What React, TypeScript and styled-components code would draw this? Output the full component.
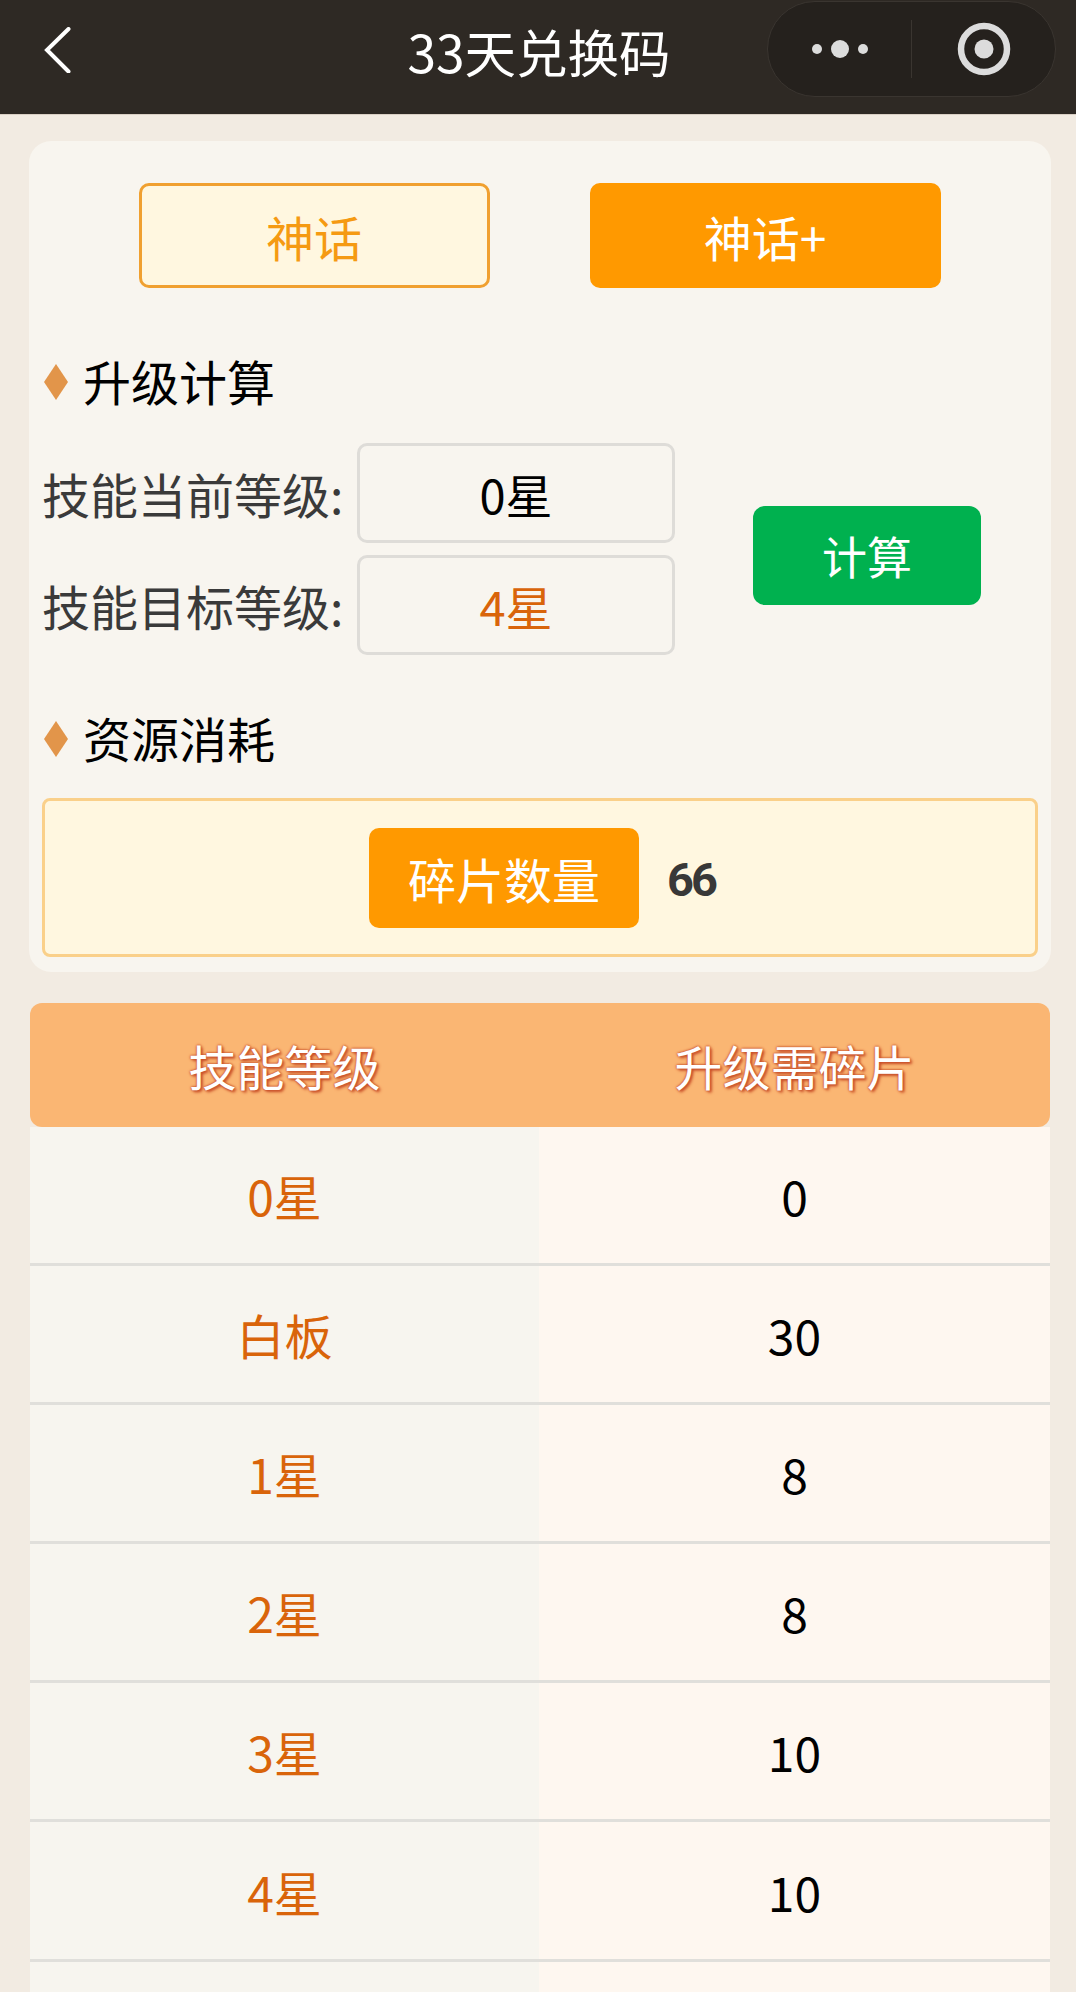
import styled, { createGlobalStyle } from "styled-components";

const levels = [
  { level: "0星", shards: "0" },
  { level: "白板", shards: "30" },
  { level: "1星", shards: "8" },
  { level: "2星", shards: "8" },
  { level: "3星", shards: "10" },
  { level: "4星", shards: "10" },
  { level: "", shards: "" },
];

export default function App() {
  return (
    <>
      <GlobalStyle />
      <Page>
        <NavBar>
          <BackButton aria-label="返回">
            <svg width="30" height="46" viewBox="0 0 30 46" fill="none">
              <path d="M26.5 2 L5 23 L26.5 44.5" stroke="#fff" strokeWidth="4" strokeLinecap="round" />
            </svg>
          </BackButton>
          <NavTitle>33天兑换码</NavTitle>
          <Capsule>
            <CapsulePart>
              <svg width="60" height="20" viewBox="0 0 60 20">
                <circle cx="7" cy="10" r="5" fill="#dcdcdc" />
                <circle cx="30" cy="10" r="9" fill="#dcdcdc" />
                <circle cx="53" cy="10" r="5" fill="#dcdcdc" />
              </svg>
            </CapsulePart>
            <CapsuleDivider />
            <CapsulePart>
              <svg width="54" height="54" viewBox="0 0 54 54">
                <circle cx="27" cy="27" r="23" fill="none" stroke="#dcdcdc" strokeWidth="6.5" />
                <circle cx="27" cy="27" r="9.5" fill="#dcdcdc" />
              </svg>
            </CapsulePart>
          </Capsule>
        </NavBar>

        <Content>
          <Card>
            <TabRow>
              <Tab>神话</Tab>
              <Tab $active>神话+</Tab>
            </TabRow>

            <SectionTitle>升级计算</SectionTitle>
            <CalcRow>
              <Fields>
                <Field>
                  <FieldLabel>技能当前等级:</FieldLabel>
                  <Picker>0星</Picker>
                </Field>
                <Field>
                  <FieldLabel>技能目标等级:</FieldLabel>
                  <Picker $accent>4星</Picker>
                </Field>
              </Fields>
              <CalcButton>计算</CalcButton>
            </CalcRow>

            <SectionTitle $second>资源消耗</SectionTitle>
            <ResultBox>
              <ResultTag>碎片数量</ResultTag>
              <ResultValue>66</ResultValue>
            </ResultBox>
          </Card>

          <Table>
            <TableHead>
              <HeadCell>技能等级</HeadCell>
              <HeadCell>升级需碎片</HeadCell>
            </TableHead>
            {levels.map((row, i) => (
              <TableRow key={i}>
                <LevelCell>{row.level}</LevelCell>
                <ValueCell>{row.shards}</ValueCell>
              </TableRow>
            ))}
          </Table>
        </Content>
      </Page>
    </>
  );
}

const GlobalStyle = createGlobalStyle`
  html, body {
    margin: 0;
    height: 1992px;
    overflow: hidden;
    background: #f2ebe2;
  }
  * {
    box-sizing: border-box;
  }
  body {
    font-family: "Noto Sans CJK SC", "Liberation Sans", sans-serif;
  }
`;

const Page = styled.div`
  width: 1076px;
  height: 1992px;
  overflow: hidden;
  background: #f2ebe2;
`;

const NavBar = styled.header`
  height: 115px;
  background: #2e2924;
  border-bottom: 1px solid #d9cfc4;
  display: flex;
  align-items: center;
  justify-content: center;
  position: relative;
`;

const BackButton = styled.div`
  position: absolute;
  left: 42px;
  top: 27px;
  display: flex;
`;

const NavTitle = styled.h1`
  margin: -13px 0 0 2px;
  font-size: 51.5px;
  font-weight: 400;
  color: #fff;
  line-height: 1;
`;

const Capsule = styled.div`
  position: absolute;
  left: 767px;
  top: 1px;
  width: 289px;
  height: 96px;
  border-radius: 48px;
  background: #25211d;
  border: 1px solid #3a3530;
  display: flex;
  align-items: center;
`;

const CapsulePart = styled.div`
  flex: 1;
  display: flex;
  justify-content: center;
`;

const CapsuleDivider = styled.div`
  width: 1px;
  height: 58px;
  background: #3a3530;
`;

const Content = styled.main`
  padding: 26px 25px 0 29px;
  display: flex;
  flex-direction: column;
  gap: 31px;
`;

const Card = styled.section`
  height: 831px;
  background: #f8f5ef;
  border-radius: 22px;
  padding: 42px 13px 0 13px;
`;

const TabRow = styled.div`
  display: flex;
  justify-content: center;
  gap: 100px;
  padding-right: 1px;
`;

const Tab = styled.div<{ $active?: boolean }>`
  width: 351px;
  height: 105px;
  border-radius: 10px;
  display: flex;
  align-items: center;
  justify-content: center;
  font-size: 48px;
  background: ${(p) => (p.$active ? "#ff9900" : "#fff7e0")};
  color: ${(p) => (p.$active ? "#fff" : "#f59a12")};
  border: 3px solid ${(p) => (p.$active ? "#ff9900" : "#f0a030")};
`;

const SectionTitle = styled.h2<{ $second?: boolean }>`
  margin: ${(p) => (p.$second ? "47px 0 0" : "57px 0 0")};
  height: 70px;
  font-size: 48px;
  font-weight: 400;
  line-height: 70px;
  color: #000;
  display: flex;
  align-items: center;
  gap: 15px;
  &::before {
    content: "";
    margin: 4px 0 0 2px;
    width: 24px;
    height: 36px;
    background: #e2954a;
    clip-path: polygon(50% 0, 100% 50%, 50% 100%, 0 50%);
  }
`;

const CalcRow = styled.div`
  display: flex;
  align-items: center;
  margin-top: 28px;
`;

const Fields = styled.div`
  display: flex;
  flex-direction: column;
  gap: 12px;
`;

const Field = styled.div`
  display: flex;
  align-items: center;
  gap: 15px;
`;

const FieldLabel = styled.span`
  width: 300px;
  font-size: 48px;
  line-height: 1;
  color: #3a3a3a;
  white-space: nowrap;
`;

const Picker = styled.div<{ $accent?: boolean }>`
  width: 318px;
  height: 100px;
  border: 3px solid #dedcd8;
  border-radius: 10px;
  display: flex;
  align-items: center;
  justify-content: center;
  font-size: 47px;
  color: ${(p) => (p.$accent ? "#d9640a" : "#000")};
`;

const CalcButton = styled.div`
  width: 228px;
  height: 99px;
  margin: 13px 0 0 78px;
  border-radius: 12px;
  background: #00b14f;
  color: #fff;
  font-size: 45px;
  display: flex;
  align-items: center;
  justify-content: center;
`;

const ResultBox = styled.div`
  margin-top: 26px;
  height: 159px;
  background: #fff7e0;
  border: 3px solid #fad08a;
  border-radius: 8px;
  display: flex;
  align-items: center;
  justify-content: center;
  gap: 28px;
  padding-left: 4px;
`;

const ResultTag = styled.div`
  width: 270px;
  height: 100px;
  border-radius: 10px;
  background: #ff9900;
  color: #fff;
  font-size: 48px;
  display: flex;
  align-items: center;
  justify-content: center;
`;

const ResultValue = styled.span`
  margin-top: 3px;
  font-size: 47px;
  font-weight: 700;
  letter-spacing: -3px;
  color: #383838;
  font-family: "Roboto", "Liberation Sans", sans-serif;
`;

const Table = styled.section`
  display: flex;
  flex-direction: column;
  margin: 0 1px 0 1px;
`;

const TableHead = styled.div`
  height: 124px;
  display: grid;
  grid-template-columns: 509px 1fr;
  background: #fab673;
  border-radius: 12px;
`;

const HeadCell = styled.div`
  display: flex;
  align-items: center;
  justify-content: center;
  font-size: 48px;
  color: #fff;
  text-shadow: 0 0 2px #c9502a, 0 0 3px #c9502a, 2px 2px 3px #c9502a;
`;

const TableRow = styled.div`
  height: 139.1px;
  display: grid;
  grid-template-columns: 509px 1fr;
  border-bottom: 3px solid #e0dfdb;
`;

const LevelCell = styled.div`
  display: flex;
  align-items: center;
  justify-content: center;
  background: #f7f5ef;
  font-size: 48px;
  color: #d9640a;
`;

const ValueCell = styled.div`
  display: flex;
  align-items: center;
  justify-content: center;
  background: #fef7f0;
  font-size: 48px;
  color: #000;
`;
